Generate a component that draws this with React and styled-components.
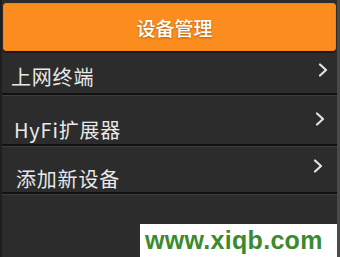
import React from 'react';
import styled, {createGlobalStyle} from 'styled-components';

const GlobalStyle = createGlobalStyle`
  html, body {
    margin: 0;
    padding: 0;
    background: #2b2b2b;
  }
  * { box-sizing: border-box; }
`;

const Screen = styled.div`
  position: relative;
  width: 340px;
  height: 257px;
  overflow: hidden;
  background: #2c2c2c;
  border-left: 2px solid #1e1e1e;
  border-right: 3px solid #4a4a4a;
  padding-top: 3px;
  display: flex;
  flex-direction: column;
  font-family: "Noto Sans CJK SC", "Noto Sans", sans-serif;
`;

const Header = styled.div`
  margin: 0 1px 0 1px;
  height: 48px;
  background: #fb8d1f;
  border-radius: 3px;
  border: 1px solid #f58419;
  display: flex;
  align-items: center;
  justify-content: center;
  padding-left: 10px;
  color: #fff;
  font-size: 19px;
  font-weight: 500;
  text-shadow: 0 1px 2px rgba(120, 60, 0, 0.6);
  box-shadow: 0 2px 0 #1c1c1c;
`;

const List = styled.div`
  display: flex;
  flex-direction: column;
  margin-top: 2px;
`;

const Row = styled.div`
  height: ${p => p.h}px;
  display: flex;
  align-items: flex-end;
  justify-content: space-between;
  padding-left: ${p => p.indent}px;
  padding-bottom: ${p => p.bottom}px;
  border-bottom: 2px solid #111;
  box-shadow: 0 1px 0 #3d3d3d;
  margin-bottom: 1px;
  color: #e8e8e8;
  font-size: 20px;
  line-height: 1;
`;

const Label = styled.span`
  letter-spacing: 0.8px;
`;

const Chevron = styled.svg`
  align-self: flex-start;
  margin-top: ${p => p.top}px;
  margin-right: ${p => p.right}px;
  width: 10px;
  height: 14px;
`;

const Watermark = styled.div`
  position: absolute;
  left: 138px;
  bottom: 0;
  width: 200px;
  height: 33px;
  background: #fff;
  display: flex;
  align-items: center;
  padding-left: 5px;
  color: #3b8a2e;
  font-family: "Liberation Sans", Arial, sans-serif;
  font-weight: bold;
  font-size: 25px;
  letter-spacing: 0.3px;
`;

const items = [
  {label: '上网终端', h: 42, indent: 9, bottom: 6, top: 10, right: 9},
  {label: 'HyFi扩展器', h: 50, indent: 12, bottom: 4, top: 16, right: 12},
  {label: '添加新设备', h: 47, indent: 14, bottom: 3, top: 12, right: 14},
];

function App() {
  return (
    <>
      <GlobalStyle/>
      <Screen>
        <Header>设备管理</Header>
        <List>
          {items.map((item, i) => (
            <Row key={i} h={item.h} indent={item.indent} bottom={item.bottom}>
              <Label>{item.label}</Label>
              <Chevron viewBox="0 0 10 14" top={item.top} right={item.right}>
                <path d="M2 1.5 L8 7 L2 12.5" fill="none" stroke="#e2e2e2" strokeWidth="2.2" strokeLinecap="round" strokeLinejoin="round"/>
              </Chevron>
            </Row>
          ))}
        </List>
        <Watermark>www.xiqb.com</Watermark>
      </Screen>
    </>
  );
}

export default App;
